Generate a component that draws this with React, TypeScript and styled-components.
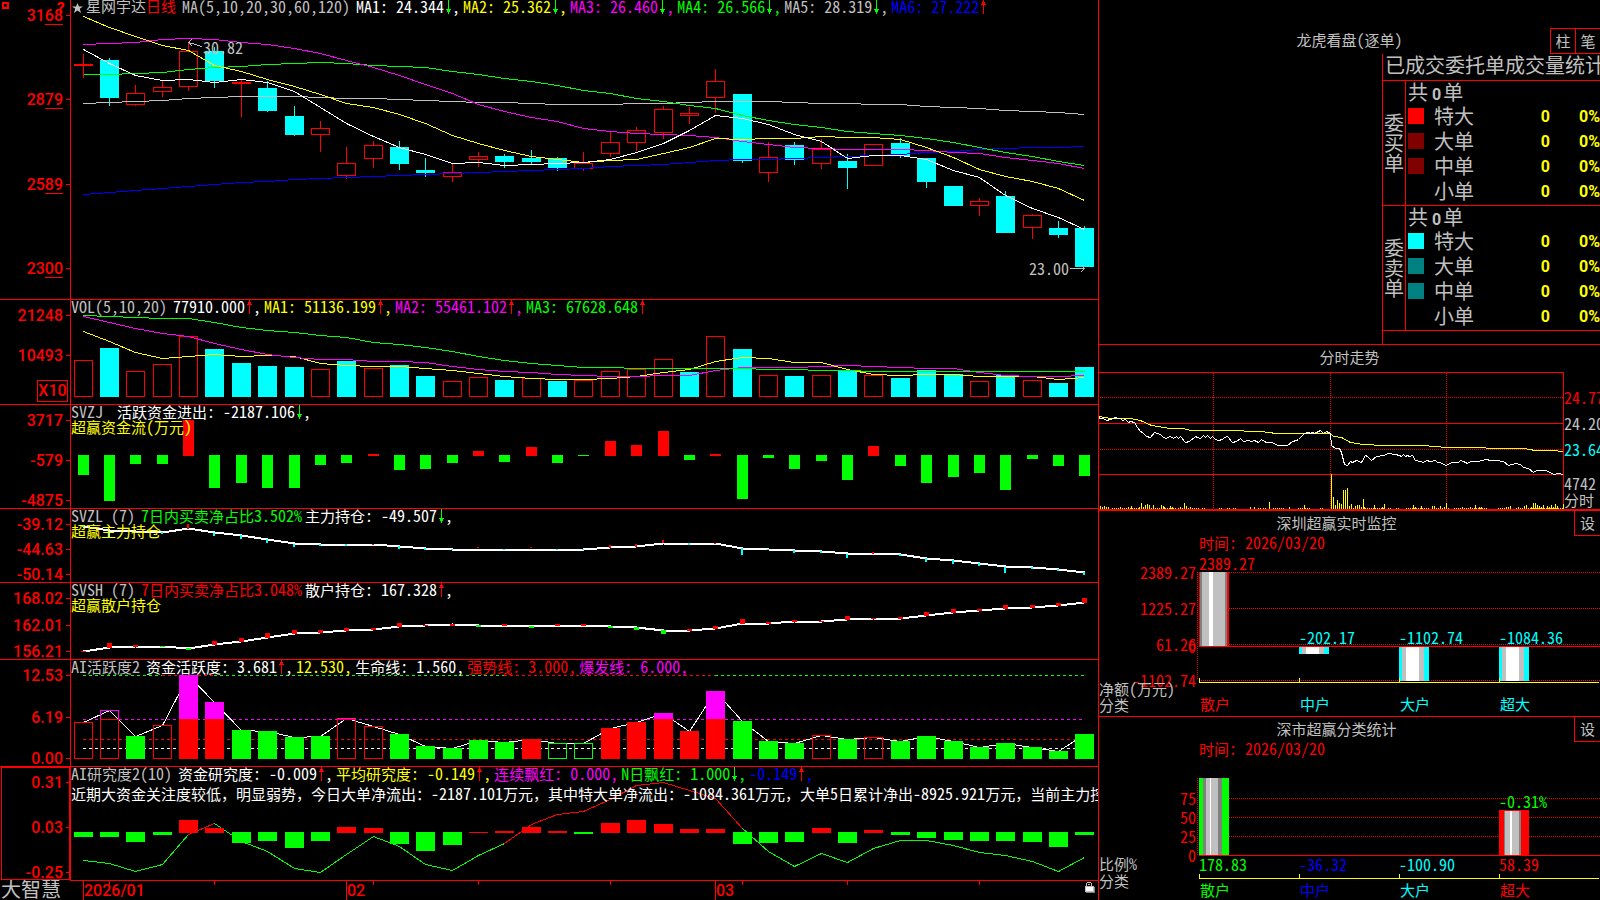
import React from "react";
import styled, { createGlobalStyle } from "styled-components";

const RED = "#ff0000";
const GREEN = "#00ff00";
const CYAN = "#00ffff";
const YELLOW = "#ffff00";
const MAGENTA = "#ff00ff";
const BLUE = "#0000ff";
const GREY = "#c0c0c0";
const DIM = "#808080";
const WHITE = "#ffffff";

const HALF = `"Noto Sans Mono CJK SC", "Liberation Mono", monospace`;
const FULL = `"Noto Sans CJK SC", sans-serif`;
const BOLD = `Roboto, "Liberation Sans", sans-serif`;

const GlobalStyle = createGlobalStyle`
  html, body { margin: 0; background: #000; color: ${GREY}; }
  body { font: 15px/16px ${FULL}; overflow: hidden; }
  * { box-sizing: border-box; }
  svg { display: block; width: 100%; height: 100%; min-height: 0; }
`;

/* ---------- text ---------- */

const HalfRun = styled.span`
  font-family: ${HALF};
  font-size: 16px;
`;

const SvgText = styled.text`
  font-family: ${FULL};
  font-size: 15px;
  white-space: pre;
`;

const SvgHalf = styled.tspan`
  font-family: ${HALF};
  font-size: 16px;
`;

const SvgBold = styled.text`
  font-family: ${BOLD};
  font-size: 16px;
  font-weight: 500;
`;

const runs = (s: string) => s.split(/([\x20-\x7e]+)/).filter(Boolean);
const isHalf = (s: string) => s.charCodeAt(0) < 127;

function Mixed({ text }: { text: string }) {
  return <>{runs(text).map((r, i) => (isHalf(r) ? <HalfRun key={i}>{r}</HalfRun> : r))}</>;
}

/** Chart label; y is the middle of the line. */
function Label({ x, y, color, end, text }: { x: number; y: number; color: string; end?: boolean; text: string }) {
  return (
    <SvgText x={x} y={y + (isHalf(text) ? 6 : 5)} fill={color} textAnchor={end ? "end" : "start"}>
      {runs(text).map((r, i) => (isHalf(r) ? <SvgHalf key={i}>{r}</SvgHalf> : r))}
    </SvgText>
  );
}

/* ---------- page frame ---------- */

const Page = styled.main`
  display: grid;
  grid-template-columns: minmax(0, 1099fr) minmax(0, 501fr);
  height: 100vh;
`;

const Charts = styled.section`
  display: grid;
  grid-template-rows: 300fr 105fr 104fr 74fr 77fr 107fr 113fr 20fr;
  border-right: 1px solid ${RED};
  min-height: 0;
`;

const ChartRow = styled.div<{ $open?: boolean }>`
  display: grid;
  grid-template-columns: 71px minmax(0, 1fr);
  grid-template-rows: minmax(0, 1fr);
  min-height: 0;
  border-bottom: ${(p) => (p.$open ? "none" : `1px solid ${RED}`)};
`;

const Axis = styled.div<{ $boxed?: boolean; $bottom?: number }>`
  display: flex;
  flex-direction: column;
  justify-content: space-between;
  position: relative;
  min-height: 0;
  padding: 8px 0 ${(p) => p.$bottom || 0}px;
  border-right: 1px solid ${RED};
  &::before {
    content: "";
    display: ${(p) => (p.$boxed ? "block" : "none")};
    position: absolute;
    inset: 0 0 0 1px;
    border: 1px solid ${RED};
  }
`;

const Tick = styled.div`
  display: flex;
  align-items: center;
  justify-content: flex-end;
  height: 15px;
  gap: 3px;
  color: ${RED};
  font: 500 16px/15px ${BOLD};
  &::after {
    content: "";
    width: 4px;
    height: 1px;
    background: ${RED};
  }
`;

const TickPair = styled.div`
  display: grid;
  gap: 25px;
`;

const Cents = styled.span`
  text-decoration: underline 1px;
  text-decoration-skip-ink: none;
  text-underline-offset: 3px;
`;

const Unit = styled.div`
  align-self: flex-end;
  width: 31px;
  height: 22px;
  margin: 0 2px 2px 0;
  border: 1px solid ${RED};
  color: ${RED};
  text-align: center;
  font: 500 16px/20px ${BOLD};
`;

const Plot = styled.div`
  display: grid;
  grid-template: minmax(0, 1fr) / minmax(0, 1fr);
  min-height: 0;
  overflow-x: clip;
  > * { grid-area: 1 / 1; }
`;

const Legend = styled.div`
  z-index: 1;
  align-self: start;
`;

const LegendRow = styled.div`
  display: flex;
  gap: 3px;
  height: 16px;
  line-height: 12px;
  white-space: pre;
`;

const Name = styled.span<{ $c?: string }>`
  color: ${(p) => p.$c || GREY};
  margin-right: 3px;
`;

const Item = styled.span<{ $c: string }>`
  display: flex;
  color: ${(p) => p.$c};
`;

const SubTitle = styled.div<{ $c: string; $gap?: number }>`
  color: ${(p) => p.$c};
  height: 15px;
  line-height: 11px;
  margin-top: ${(p) => p.$gap || 0}px;
  white-space: nowrap;
`;

const ArrowBox = styled.span`
  flex: none;
  width: 8px;
  height: 14px;
`;

function Arrow({ up }: { up?: boolean }) {
  return (
    <ArrowBox>
      <svg viewBox="0 0 8 14" shapeRendering="crispEdges" fill={up ? RED : GREEN}>
        <rect x="4" y="0" width="1" height="14" />
        {up ? (
          <>
            <rect x="3" y="2" width="3" height="2" />
            <rect x="2" y="4" width="5" height="1" />
          </>
        ) : (
          <>
            <rect x="3" y="10" width="3" height="2" />
            <rect x="2" y="9" width="5" height="1" />
          </>
        )}
      </svg>
    </ArrowBox>
  );
}

type LegendEntry = { c: string; t: string; dir?: "up" | "down"; end?: string };

function Entries({ items }: { items: LegendEntry[] }) {
  return (
    <>
      {items.map((it) => (
        <Item key={it.t} $c={it.c}>
          <span><Mixed text={it.t} /></span>
          {it.dir && <Arrow up={it.dir === "up"} />}
          <span><Mixed text={it.end ?? ","} /></span>
        </Item>
      ))}
    </>
  );
}

/* ---------- series ---------- */

const cx = (i: number) => Math.round(82.65 + 26.36 * i);
const third = (v: number, off: number) => Math.round(v / 3 + off);

function Line({ ys, off, color, from = 0, width = 1 }: { ys: number[]; off: number; color: string; from?: number; width?: number }) {
  const pts = ys.map((v, k) => `${cx(k + from) + 0.5},${Math.floor(v / 3 + off) + 0.5}`).join(" ");
  return <polyline points={pts} fill="none" stroke={color} strokeWidth={width} />;
}

function Box({ i, top, bottom, color, hollow, w = 19 }: { i: number; top: number; bottom: number; color: string; hollow?: boolean; w?: number }) {
  const x = cx(i) - (w - 1) / 2;
  const h = Math.max(1, bottom - top);
  return hollow ? (
    <rect x={x + 0.5} y={top + 0.5} width={w - 1} height={h - 1} fill="none" stroke={color} />
  ) : (
    <rect x={x} y={top} width={w} height={h} fill={color} />
  );
}

// kind, high, body top, body bottom, low: r rising, c falling, d flat
const candles: [string, number, number, number, number][] = [
  ["d", 163, 192, 198, 234], ["c", 174, 180, 294, 318], ["r", 255, 279, 315, 318], ["r", 243, 261, 276, 291],
  ["r", 128, 153, 261, 272], ["c", 141, 153, 243, 264], ["d", 240, 246, 252, 351], ["c", 243, 264, 333, 336],
  ["c", 318, 348, 405, 408], ["r", 363, 384, 405, 456], ["r", 441, 489, 528, 537], ["r", 423, 435, 477, 504],
  ["c", 423, 441, 492, 510], ["c", 474, 510, 519, 531], ["r", 490, 516, 531, 546], ["r", 456, 468, 480, 501],
  ["c", 462, 468, 486, 504], ["c", 450, 474, 486, 492], ["c", 471, 474, 504, 513], ["r", 456, 489, 507, 513],
  ["r", 395, 426, 462, 471], ["r", 381, 390, 429, 453], ["r", 318, 327, 399, 417], ["r", 321, 339, 348, 372],
  ["r", 207, 243, 294, 339], ["c", 282, 282, 483, 489], ["r", 426, 471, 519, 546], ["c", 426, 435, 480, 495],
  ["r", 417, 447, 492, 507], ["c", 462, 483, 504, 567], ["r", 432, 432, 498, 498], ["c", 414, 429, 468, 474],
  ["c", 474, 474, 546, 564], ["c", 558, 558, 618, 618], ["r", 594, 603, 618, 648], ["c", 573, 588, 699, 699],
  ["r", 642, 645, 684, 717], ["c", 663, 684, 705, 714], ["c", 678, 684, 801, 801],
];

const ma: [string, number[]][] = [
  [GREY, [311, 307, 305, 300, 295, 292, 290, 289, 289, 292, 295, 295, 299, 301, 304, 307, 308, 309, 313, 313, 313, 310, 310, 307, 304, 304, 304, 307, 310, 310, 313, 314, 319, 322, 325, 330, 334, 337, 343]],
  [BLUE, [583, 578, 571, 566, 560, 554, 548, 543, 539, 536, 533, 529, 527, 524, 521, 518, 515, 512, 509, 506, 500, 497, 493, 487, 482, 479, 478, 475, 471, 469, 465, 463, 458, 454, 449, 444, 442, 441, 438]],
  [GREEN, [223, 223, 220, 216, 208, 202, 198, 193, 189, 187, 190, 195, 199, 203, 214, 222, 235, 245, 256, 271, 281, 295, 304, 316, 326, 347, 360, 373, 381, 393, 400, 406, 415, 427, 442, 457, 470, 484, 497]],
  [MAGENTA, [132, 130, 127, 118, 115, 118, 126, 133, 146, 161, 181, 201, 227, 253, 280, 312, 334, 352, 365, 384, 395, 401, 404, 407, 413, 423, 433, 441, 445, 448, 448, 449, 450, 457, 461, 472, 480, 491, 505]],
  [YELLOW, [48, 83, 109, 136, 151, 196, 215, 239, 260, 282, 310, 322, 344, 370, 406, 430, 451, 469, 478, 486, 482, 478, 459, 441, 414, 417, 414, 414, 409, 412, 412, 419, 443, 471, 507, 528, 545, 566, 601]],
  [WHITE, [148, 190, 227, 240, 239, 247, 238, 247, 275, 322, 371, 408, 443, 464, 490, 488, 496, 493, 490, 486, 479, 458, 429, 392, 347, 354, 373, 403, 424, 475, 467, 467, 478, 512, 533, 586, 624, 653, 688]],
];

const volumes = "r192 c156 r225 r204 r120 c159 c201 c210 c213 r219 c195 r216 c207 c240 r255 r243 c252 r246 c255 r252 r225 r219 r189 c228 r120 c159 r237 c240 r237 c222 r237 c246 c222 c234 r255 c237 r252 c261 c213".split(" ");

const volMa: [string, number[]][] = [
  [YELLOW, [105, 136, 169, 187, 181, 176, 181, 177, 182, 202, 208, 211, 212, 217, 223, 231, 240, 246, 250, 250, 246, 241, 230, 221, 196, 184, 187, 199, 200, 221, 234, 239, 235, 235, 241, 241, 241, 250, 243]],
  [MAGENTA, [61, 79, 97, 112, 121, 143, 160, 176, 184, 189, 190, 196, 197, 200, 211, 220, 226, 230, 235, 239, 241, 241, 239, 238, 223, 214, 214, 213, 210, 208, 211, 214, 217, 217, 229, 238, 241, 241, 238]],
  [GREEN, [58, 61, 64, 67, 68, 80, 94, 104, 109, 118, 124, 139, 145, 154, 166, 181, 193, 202, 207, 214, 214, 217, 217, 217, 217, 217, 220, 220, 223, 223, 226, 226, 226, 226, 226, 226, 226, 226, 226]],
];

const flow = "g537 g615 g504 g504 r372 g576 g561 g576 g576 g507 g501 r474 g522 g519 g501 r465 g498 r453 g501 g480 r435 r447 r405 g492 r474 g609 g486 g519 g495 g552 r450 g510 g561 g543 g531 g582 g489 g510 g540".split(" ");

const holding = [690, 704, 707, 709, 698, 710, 717, 730, 743, 744, 744, 744, 750, 758, 759, 759, 759, 759, 759, 759, 754, 752, 742, 741, 741, 758, 760, 764, 766, 773, 773, 774, 787, 792, 801, 812, 814, 820, 828];
const holdingMarks = "c688-694 c704-724 c706-711 c709-713 r684-698 c710-719 c717-729 c730-740 c743-752 c744-749 c744-749 r743-747 c750-759 c756-762 c759-762 r753-757 c759-762 r753-757 c759-762 c759-762 r747-756 r743-752 r732-742 c741-747 r740-744 c757-777 c759-762 c762-771 c765-771 c773-786 r768-774 c773-780 c786-798 c792-804 c801-810 c812-831 c813-819 c819-825 c828-837".split(" ");

const retail = [184, 171, 170, 168, 175, 163, 155, 142, 130, 128, 121, 119, 109, 106, 104, 105, 105, 107, 106, 105, 109, 113, 121, 121, 116, 99, 99, 94, 93, 88, 84, 84, 76, 67, 61, 54, 52, 46, 37];
const retailMarks = "r182-186 r159-173 r165-171 g167-171 g173-180 r153-165 r144-156 r129-144 r120-132 r120-129 r114-123 r114-120 r99-110 r105-108 r102-107 g105-111 r102-107 g108-114 r102-107 r102-107 g107-114 g111-120 g120-132 r117-123 r108-117 r87-102 r96-102 r90-96 r93-96 r78-90 r84-87 r81-87 r66-78 r57-69 r57-63 r45-57 r45-54 r39-48 r24-39".split(" ");

// R and G are hollow, r and g are filled
const activity = "R396 R360 g438 R405 r255 r336 g420 g423 g441 g438 R384 R408 g432 g468 g474 g450 g456 r448 G459 G459 r414 r396 r369 r423 r303 g393 g453 g459 R435 g447 R441 g453 g438 g453 g471 g459 g471 g483 g432".split(" ");

const research = "g741 g741 g756 g735 r690 r714 g759 g753 g774 g753 r711 r714 g762 g783 g765 r726 r723 r711 r723 g732 r699 r690 r702 r717 r717 g762 g759 g756 r714 g759 r720 g735 g744 g750 g753 g753 g756 g771 g735".split(" ");
const researchLine = [811, 821, 844, 824, 734, 700, 754, 783, 835, 848, 793, 739, 768, 824, 841, 797, 759, 703, 673, 664, 628, 587, 577, 600, 625, 716, 785, 830, 790, 817, 775, 751, 751, 766, 787, 796, 815, 844, 801];

const val = (s: string) => Number(s.slice(1));
const tone: Record<string, string> = { r: RED, R: RED, g: GREEN, G: GREEN, c: CYAN };

function PlotSvg({ h, children }: { h: number; children: React.ReactNode }) {
  return (
    <svg viewBox={`71 0 1027 ${h}`} preserveAspectRatio="none" shapeRendering="crispEdges">
      {children}
    </svg>
  );
}

/* ---------- left-hand charts ---------- */

const CornerMark = styled.span`
  position: absolute;
  left: 2px;
  top: 2px;
  width: 7px;
  height: 7px;
  border: 2px solid ${RED};
`;

const HelpMark = styled.span`
  position: absolute;
  left: 57px;
  top: 0;
  color: ${RED};
  font: 900 15px/16px ${BOLD};
`;

const StarBox = styled.span`
  width: 11px;
  height: 15px;
  margin-left: 1px;
`;

const StockName = styled.span`
  margin-right: 3px;
  em { font-style: normal; color: ${RED}; }
`;

function PriceChart() {
  return (
    <ChartRow>
      <Axis $bottom={23}>
        <CornerMark />
        <HelpMark>?</HelpMark>
        {["3168", "2879", "2589", "2300"].map((v) => (
          <Tick key={v}>
            <span>{v.slice(0, 2)}<Cents>{v.slice(2)}</Cents></span>
          </Tick>
        ))}
      </Axis>
      <Plot>
        <Legend>
          <LegendRow>
            <StarBox>
              <svg viewBox="0 0 11 15" fill={GREY}>
                <path d="M5.5 3 7 6.6H11L7.8 8.8 9 13 5.5 10.5 2 13 3.2 8.8 0 6.6H4Z" />
              </svg>
            </StarBox>
            <StockName>星网宇达<em>日线</em></StockName>
            <Name><Mixed text="MA(5,10,20,30,60,120)" /></Name>
            <Entries
              items={[
                { c: WHITE, t: "MA1: 24.344", dir: "down" },
                { c: YELLOW, t: "MA2: 25.362", dir: "down" },
                { c: MAGENTA, t: "MA3: 26.460", dir: "down" },
                { c: GREEN, t: "MA4: 26.566", dir: "down" },
                { c: GREY, t: "MA5: 28.319", dir: "down" },
                { c: BLUE, t: "MA6: 27.222", dir: "up", end: "" },
              ]}
            />
          </LegendRow>
        </Legend>
        <PlotSvg h={299}>
          {candles.map(([k, hi, t, b, lo], i) => {
            const color = k === "c" ? CYAN : RED;
            const top = third(t, 0);
            const bottom = third(b, 0);
            const high = third(hi, 0);
            const low = third(lo, 0);
            return (
              <g key={i}>
                <rect x={cx(i)} y={high} width={1} height={top - high} fill={color} />
                <rect x={cx(i)} y={bottom} width={1} height={low - bottom} fill={color} />
                <Box i={i} top={top} bottom={bottom} color={color} hollow={k === "r"} />
              </g>
            );
          })}
          {ma.map(([c, ys], i) => <Line key={i} ys={ys} off={0} color={c} />)}
          <path d="M188.5 42.5L202 46.5M192 39L188.5 42.5L192 46" stroke={GREY} fill="none" />
          <Label x={203} y={48} color={GREY} text="30.82" />
          <Label x={1029} y={269} color={GREY} text="23.00" />
          <path d="M1070 268.5H1085M1081 265L1084.5 268.5L1081 272" stroke={GREY} fill="none" />
        </PlotSvg>
      </Plot>
    </ChartRow>
  );
}

function Ticks({ values }: { values: string[] }) {
  return <>{values.map((v) => <Tick key={v}>{v}</Tick>)}</>;
}

function VolumeChart() {
  return (
    <ChartRow>
      <Axis>
        <TickPair><Ticks values={["21248", "10493"]} /></TickPair>
        <Unit>X10</Unit>
      </Axis>
      <Plot>
        <Legend>
          <LegendRow>
            <Name><Mixed text="VOL(5,10,20)" /></Name>
            <Entries
              items={[
                { c: WHITE, t: "77910.000", dir: "up" },
                { c: YELLOW, t: "MA1: 51136.199", dir: "up" },
                { c: MAGENTA, t: "MA2: 55461.102", dir: "up" },
                { c: GREEN, t: "MA3: 67628.648", dir: "up", end: "" },
              ]}
            />
          </LegendRow>
        </Legend>
        <PlotSvg h={104}>
          {volumes.map((v, i) => (
            <Box key={i} i={i} top={third(val(v), -4)} bottom={97} color={tone[v[0]]} hollow={v[0] === "r"} />
          ))}
          {volMa.map(([c, ys], i) => <Line key={i} ys={ys} off={-4} color={c} />)}
        </PlotSvg>
      </Plot>
    </ChartRow>
  );
}

function FlowChart() {
  return (
    <ChartRow>
      <Axis><Ticks values={["3717", "-579", "-4875"]} /></Axis>
      <Plot>
        <Legend>
          <LegendRow>
            <Name><Mixed text="SVZJ " /></Name>
            <Entries items={[{ c: WHITE, t: "活跃资金进出: -2187.106", dir: "down" }]} />
          </LegendRow>
          <SubTitle $c={YELLOW}><Mixed text="超赢资金流(万元)" /></SubTitle>
        </Legend>
        <PlotSvg h={103}>
          {flow.map((v, i) =>
            v[0] === "g" ? (
              <Box key={i} i={i} w={11} top={50} bottom={third(val(v), -109)} color={GREEN} />
            ) : (
              <Box key={i} i={i} w={11} top={third(val(v), -109)} bottom={51} color={RED} />
            ),
          )}
        </PlotSvg>
      </Plot>
    </ChartRow>
  );
}

function Marks({ marks, off, w }: { marks: string[]; off: number; w: number }) {
  return (
    <>
      {marks.map((m, i) => {
        const [a, b] = m.slice(1).split("-").map(Number);
        const y = third(a, off);
        return <rect key={i} x={cx(i) - Math.floor(w / 2)} y={y} width={w} height={Math.max(1, third(b, off) - y)} fill={tone[m[0]]} />;
      })}
    </>
  );
}

function HoldingChart() {
  return (
    <ChartRow>
      <Axis><Ticks values={["-39.12", "-44.63", "-50.14"]} /></Axis>
      <Plot>
        <Legend>
          <LegendRow>
            <Name><Mixed text="SVZL (7)" /></Name>
            <Entries
              items={[
                { c: GREEN, t: "7日内买卖净占比3.502%", end: "" },
                { c: WHITE, t: "主力持仓: -49.507", dir: "down" },
              ]}
            />
          </LegendRow>
          <SubTitle $c={YELLOW}>超赢主力持仓</SubTitle>
        </Legend>
        <PlotSvg h={73}>
          <Line ys={holding} off={-213} color={WHITE} width={2} />
          <Marks marks={holdingMarks} off={-213} w={2} />
        </PlotSvg>
      </Plot>
    </ChartRow>
  );
}

function RetailChart() {
  return (
    <ChartRow>
      <Axis><Ticks values={["168.02", "162.01", "156.21"]} /></Axis>
      <Plot>
        <Legend>
          <LegendRow>
            <Name><Mixed text="SVSH (7)" /></Name>
            <Entries
              items={[
                { c: RED, t: "7日内买卖净占比3.048%", end: "" },
                { c: WHITE, t: "散户持仓: 167.328", dir: "up" },
              ]}
            />
          </LegendRow>
          <SubTitle $c={YELLOW}>超赢散户持仓</SubTitle>
        </Legend>
        <PlotSvg h={76}>
          <Line ys={retail} off={7} color={WHITE} width={2} />
          <Marks marks={retailMarks} off={7} w={5} />
        </PlotSvg>
      </Plot>
    </ChartRow>
  );
}

function ActivityChart() {
  const burst = 59;
  const dash = (y: number, c: string, a = 83, b = 1084) => (
    <path d={`M${a} ${y + 0.5}H${b}`} stroke={c} strokeDasharray="3 3" />
  );
  return (
    <ChartRow>
      <Axis><Ticks values={["12.53", "6.19", "0.00"]} /></Axis>
      <Plot>
        <Legend>
          <LegendRow>
            <Name><Mixed text="AI活跃度2" /></Name>
            <Entries
              items={[
                { c: WHITE, t: "资金活跃度: 3.681", dir: "up" },
                { c: YELLOW, t: "12.530" },
                { c: WHITE, t: "生命线: 1.560" },
                { c: RED, t: "强势线: 3.000" },
                { c: MAGENTA, t: "爆发线: 6.000" },
              ]}
            />
          </LegendRow>
        </Legend>
        <PlotSvg h={106}>
          {dash(15, GREEN, cx(0), cx(3))}
          {dash(15, RED, cx(3), cx(5))}
          {dash(15, GREEN, cx(5), cx(16))}
          {dash(15, RED, cx(16), cx(24))}
          {dash(15, GREEN, cx(24), cx(38))}
          {dash(burst, MAGENTA)}
          {dash(79, RED)}
          {dash(88, WHITE)}
          <Line ys={activity.map(val)} off={-70} color={WHITE} />
          {activity.map((v, i) => {
            const hollow = v[0] < "a";
            const top = third(val(v), -70);
            const over = top < burst;
            return (
              <g key={i}>
                <Box i={i} top={over ? burst : top} bottom={99} color={tone[v[0]]} hollow={hollow} />
                {over && <Box i={i} top={top} bottom={burst + (hollow ? 1 : 0)} color={MAGENTA} hollow={hollow} />}
                {over && hollow && <rect x={cx(i) - 9} y={burst} width={19} height={1} fill={RED} />}
              </g>
            );
          })}
        </PlotSvg>
      </Plot>
    </ChartRow>
  );
}

function ResearchChart() {
  const part = (a: number, b: number, c: string) => (
    <Line ys={researchLine.slice(a, b + 1)} from={a} off={-177} color={c} />
  );
  return (
    <ChartRow $open>
      <Axis $boxed><Ticks values={["0.31", "0.03", "-0.25"]} /></Axis>
      <Plot>
        <Legend>
          <LegendRow>
            <Name><Mixed text="AI研究度2(10)" /></Name>
            <Entries
              items={[
                { c: WHITE, t: "资金研究度: -0.009", dir: "up" },
                { c: YELLOW, t: "平均研究度: -0.149", dir: "up" },
                { c: MAGENTA, t: "连续飘红: 0.000" },
                { c: GREEN, t: "N日飘红: 1.000", dir: "down" },
                { c: BLUE, t: "-0.149", dir: "up" },
              ]}
            />
          </LegendRow>
          <SubTitle $c={WHITE} $gap={5}>
            <Mixed text="近期大资金关注度较低，明显弱势，今日大单净流出：-2187.101万元，其中特大单净流出：-1084.361万元，大单5日累计净出-8925.921万元，当前主力控盘" />
          </SubTitle>
        </Legend>
        <PlotSvg h={113}>
          {part(0, 4, GREEN)}
          {part(4, 5, RED)}
          {part(5, 16, GREEN)}
          {part(16, 25, RED)}
          {part(25, 38, GREEN)}
          {research.map((v, i) =>
            v[0] === "g" ? (
              <Box key={i} i={i} top={65} bottom={third(val(v), -177)} color={GREEN} />
            ) : (
              <Box key={i} i={i} top={third(val(v), -177)} bottom={66} color={RED} />
            ),
          )}
        </PlotSvg>
      </Plot>
    </ChartRow>
  );
}

const Brand = styled.div`
  padding-left: 1px;
  font-size: 20px;
  line-height: 18px;
  white-space: nowrap;
`;

const TimePlot = styled(Plot)`
  margin-left: -1px;
  border-top: 1px solid ${RED};
`;

function TimeAxis() {
  const months: [number, string][] = [[0, "2026/01"], [10, "02"], [24, "03"]];
  return (
    <ChartRow $open>
      <Brand>大智慧</Brand>
      <TimePlot>
        <svg viewBox="70 0 1028 19" preserveAspectRatio="none" shapeRendering="crispEdges">
          {months.map(([i, t]) => (
            <g key={t} fill={RED}>
              <rect x={cx(i)} y={0} width={1} height={19} />
              <SvgBold x={cx(i) + 1} y={15}>{t}</SvgBold>
            </g>
          ))}
          {[1, 5, 11, 15, 20, 25, 29, 34].map((i) => (
            <rect key={i} x={cx(i)} y={0} width={1} height={4} fill={RED} />
          ))}
          <rect x="1087" y="1" width="4" height="1" fill={GREY} />
          <rect x="1086" y="2" width="1" height="3" fill={GREY} />
          <rect x="1091" y="2" width="1" height="3" fill={GREY} />
          <rect x="1088" y="3" width="2" height="1" fill={GREY} />
          <rect x="1086" y="6" width="9" height="6" fill={DIM} />
          <rect x="1085" y="5" width="9" height="6" fill={GREY} />
          <rect x="1086" y="6" width="7" height="4" fill={WHITE} />
        </svg>
      </TimePlot>
    </ChartRow>
  );
}

/* ---------- right-hand panels ---------- */

const Side = styled.aside`
  display: grid;
  grid-template-rows: 345fr 166fr 206fr 183fr;
  min-height: 0;
  overflow: hidden;
`;

const Panel = styled.section<{ $line: number }>`
  display: flex;
  flex-direction: column;
  min-height: 0;
  border-bottom: ${(p) => p.$line}px solid ${RED};
`;

const PanelTitle = styled.h2`
  margin: 0;
  font-size: 15px;
  font-weight: 400;
  line-height: 23px;
  text-align: center;
  flex: 1;
`;

const SmallButton = styled.button`
  width: 25px;
  height: 26px;
  padding: 0;
  border: 1px solid ${RED};
  border-right: none;
  background: #000;
  color: ${GREY};
  font: 15px/20px ${FULL};
`;

const SetButton = styled(SmallButton)`
  width: 26px;
  height: 25px;
  border-top: none;
`;

const PanelHead = styled.header`
  display: flex;
  flex: none;
  height: 25px;
`;

const OrderHead = styled.header`
  display: grid;
  grid-template-columns: 1fr auto 1fr;
  padding-top: 28px;
  flex: none;
`;

const ButtonPair = styled.div`
  display: flex;
  justify-self: end;
  grid-column: 3;
`;

const Orders = styled.div`
  flex: 1;
  align-self: flex-end;
  width: 218px;
  border-left: 1px solid ${RED};
  font-size: 20px;
`;

const OrdersTitle = styled.div`
  height: 27px;
  padding-left: 2px;
  border-bottom: 1px solid ${RED};
  line-height: 22px;
  white-space: nowrap;
`;

const Block = styled.div`
  display: flex;
  height: 125px;
  border-bottom: 1px solid ${RED};
`;

const Turned = styled.div`
  display: flex;
  flex-direction: column;
  justify-content: center;
  width: 23px;
  padding: 0 1px;
  line-height: 20px;
  text-align: center;
  border-right: 1px solid ${RED};
`;

const OrderTable = styled.table`
  flex: 1;
  align-self: flex-start;
  table-layout: fixed;
  border-collapse: collapse;
  caption {
    height: 23px;
    padding-left: 2px;
    line-height: 21px;
    text-align: left;
  }
  caption b { margin: 0 2px 0 4px; font: 700 16px/21px ${BOLD}; }
  tr { height: 25px; }
  th, td { padding: 0; line-height: 22px; }
  th { padding-bottom: 2px; font-weight: 400; text-align: left; }
  td { text-align: right; }
`;

const Num = styled.td`
  && {
    color: ${YELLOW};
    font: 700 16px/24px ${BOLD};
  }
`;

const Swatch = styled.i<{ $c: string }>`
  display: block;
  width: 16px;
  height: 16px;
  margin: 0 0 1px 2px;
  background: ${(p) => p.$c};
`;

function OrderBlock({ side, colors }: { side: string; colors: string[] }) {
  return (
    <Block>
      <Turned>{[...side].map((c) => <span key={c}>{c}</span>)}</Turned>
      <OrderTable>
        <caption>共<b>0</b>单</caption>
        <colgroup>
          <col width="28" />
          <col width="46" />
          <col width="70" />
          <col width="50" />
        </colgroup>
        <tbody>
          {["特大", "大单", "中单", "小单"].map((n, i) => (
            <tr key={n}>
              <td><Swatch $c={colors[i]} /></td>
              <th scope="row">{n}</th>
              <Num>0</Num>
              <Num>0%</Num>
            </tr>
          ))}
        </tbody>
      </OrderTable>
    </Block>
  );
}

function OrderPanel() {
  return (
    <Panel $line={1}>
      <OrderHead>
        <span />
        <PanelTitle><Mixed text="龙虎看盘(逐单)" /></PanelTitle>
        <ButtonPair>
          <SmallButton type="button">柱</SmallButton>
          <SmallButton type="button">笔</SmallButton>
        </ButtonPair>
      </OrderHead>
      <Orders>
        <OrdersTitle>已成交委托单成交量统计</OrdersTitle>
        <OrderBlock side="委买单" colors={[RED, "#800000", "#800000", "#000000"]} />
        <OrderBlock side="委卖单" colors={[CYAN, "#008080", "#008080", "#000000"]} />
      </Orders>
    </Panel>
  );
}

const avgPath = "27,229 60,235 120,235 150,240 185,255 240,264 280,265 300,270 410,271 510,275 560,279 720,280 730,288 755,292 780,308 820,312 880,315 1000,316 1070,321 1170,322 1200,325 1300,325 1335,330 1385,332 1419,334";
const pricePath = "27,226 29,234 40,236 50,241 60,237 75,232 84,236 92,234 97,242 105,238 115,247 120,243 132,248 143,262 150,273 158,277 170,290 182,292 192,278 201,281 210,282 216,290 225,295 240,290 250,295 258,290 264,295 272,290 285,307 298,303 315,289 322,291 330,294 340,287 346,292 352,286 360,294 366,290 376,297 385,301 397,299 404,292 412,290 428,306 440,303 452,296 460,304 475,302 485,304 494,302 505,306 515,298 524,304 530,306 548,307 562,317 592,317 608,303 618,302 625,298 634,290 643,279 655,276 662,279 668,276 674,280 680,277 690,271 700,279 710,275 720,280 724,315 735,326 748,326 754,336 757,350 764,374 771,376 780,364 788,367 800,361 815,366 825,346 833,348 843,361 860,350 880,347 895,340 915,343 928,347 935,349 940,344 945,349 952,345 957,348 968,345 975,360 990,365 1000,367 1010,362 1020,365 1035,362 1042,368 1050,368 1060,374 1070,375 1085,368 1095,366 1104,366 1110,360 1120,365 1132,370 1140,365 1150,363 1165,365 1185,358 1205,362 1220,360 1240,363 1255,376 1275,370 1290,374 1300,381 1315,386 1330,397 1340,391 1365,391 1380,397 1390,403 1405,401 1419,403";
const toPoints = (s: string) =>
  s.split(" ").map((p) => {
    const [x, y] = p.split(",").map(Number);
    return `${Math.floor(1090 + x / 3) + 0.5},${Math.floor(340 + y / 3) + 0.5}`;
  }).join(" ");

const spikes = "31,498 37,501 43,498 49,501 55,501 91,501 115,501 124,498 148,501 154,489 160,501 166,495 172,492 178,495 190,496 214,495 220,498 223,501 241,498 247,501 271,501 283,489 289,498 301,501 481,501 493,501 538,486 598,501 643,495 724,402 730,471 736,495 742,480 748,491 754,494 760,450 766,450 772,444 778,498 784,492 796,498 802,495 808,495 814,501 820,477 823,501 853,495 877,501 883,492 970,495 976,501 994,498 1027,498 1033,498 1051,498 1063,501 1069,489 1117,501 1141,501 1156,495 1168,501 1174,501 1249,501 1255,501 1261,498 1285,501 1303,498 1309,495 1324,501 1330,489 1336,489 1342,495 1348,498 1354,501 1360,495 1372,498 1378,501 1384,495 1390,501 1396,492 1402,498 1419,492";
const quiet: [number, number][] = [[67, 145], [184, 256], [265, 325], [337, 343], [388, 396], [412, 418], [430, 436], [505, 511], [520, 528], [550, 580], [625, 640], [646, 658], [690, 700], [790, 880], [895, 901], [920, 928], [950, 1020], [1039, 1060], [1075, 1080], [1093, 1190], [1225, 1262], [1279, 1420]];

const IntradayTitle = styled(PanelTitle)`
  flex: none;
  height: 27px;
`;

function IntradayPanel() {
  const dot = { stroke: RED, strokeDasharray: "1 1" };
  return (
    <Panel $line={2}>
      <IntradayTitle>分时走势</IntradayTitle>
      <svg viewBox="1099 372 501 137" shapeRendering="crispEdges">
        <path d="M1099 372.5H1563.5V509M1099 423.5H1563M1099 474.5H1563" stroke={RED} fill="none" />
        <path d="M1100 397.5H1563" {...dot} />
        <path d="M1100 449.5H1563" {...dot} />
        {[1213, 1330, 1446].map((x) => <path key={x} d={`M${x}.5 373V509`} {...dot} />)}
        {quiet.map(([a, b]) => (
          <path key={a} d={`M${Math.floor(1090 + a / 3)} 508.5H${Math.ceil(1090 + b / 3)}`} stroke={YELLOW} strokeDasharray="1 1" />
        ))}
        {spikes.split(" ").map((p) => {
          const [x, y] = p.split(",").map(Number);
          const top = Math.floor(340 + y / 3);
          return <rect key={p} x={Math.floor(1090 + x / 3)} y={top} width={1} height={509 - top} fill={YELLOW} />;
        })}
        <polyline points={toPoints(avgPath)} fill="none" stroke={YELLOW} />
        <polyline points={toPoints(pricePath)} fill="none" stroke={WHITE} />
        <Label x={1564} y={398} color={RED} text="24.77" />
        <Label x={1564} y={424} color={GREY} text="24.20" />
        <Label x={1564} y={450} color={CYAN} text="23.64" />
        <Label x={1564} y={484} color={GREY} text="4742" />
        <Label x={1564} y={501} color={GREY} text="分时" />
      </svg>
    </Panel>
  );
}

/** Shaded column, painted as vertical stripes from left to right. */
function Column({ x, y, h, stripes }: { x: number; y: number; h: number; stripes: [string, number][] }) {
  let at = x;
  return (
    <g>
      {stripes.map(([c, w], i) => {
        const left = at;
        at += w;
        return <rect key={i} x={left} y={y} width={w} height={h} fill={c} />;
      })}
    </g>
  );
}

const cyanStripes: [string, number][] = [[CYAN, 3], [GREY, 4], [WHITE, 13], [GREY, 5], [CYAN, 5]];

function BaseLine({ y }: { y: number }) {
  return (
    <path
      d={`M1199 ${y}.5H1599M1199.5 ${y - 4}V${y}M1299.5 ${y - 4}V${y}M1399.5 ${y - 4}V${y}M1499.5 ${y - 4}V${y}`}
      stroke={YELLOW}
      fill="none"
    />
  );
}

function Dots({ rows, top, bottom }: { rows: number[]; top: number; bottom: number }) {
  return (
    <g stroke={RED} strokeDasharray="1 1">
      <path d={`M1197.5 ${top}V${bottom}`} />
      {rows.map((y) => <path key={y} d={`M1199 ${y}.5H1600`} />)}
    </g>
  );
}

function NetPanel() {
  return (
    <Panel $line={1}>
      <PanelHead>
        <PanelTitle>深圳超赢实时监控</PanelTitle>
        <SetButton type="button">设</SetButton>
      </PanelHead>
      <svg viewBox="1099 536 501 180" shapeRendering="crispEdges">
        <Dots rows={[572, 608, 644, 680]} top={572} bottom={680} />
        <Label x={1199} y={544} color={RED} text="时间: 2026/03/20" />
        <Label x={1199} y={564} color={RED} text="2389.27" />
        <Label x={1196} y={573} color={RED} end text="2389.27" />
        <Label x={1196} y={609} color={RED} end text="1225.27" />
        <Label x={1196} y={645} color={RED} end text="61.26" />
        <Label x={1196} y={647} color={RED} end text="0" />
        <Label x={1196} y={681} color={RED} end text="-1102.74" />
        <rect x={1199} y={646} width={401} height={1} fill={RED} />
        <Column x={1199} y={572} h={74} stripes={[[RED, 1], [DIM, 2], [GREY, 7], [WHITE, 4], [GREY, 12], [DIM, 2], [RED, 2]]} />
        <Column x={1299} y={647} h={7} stripes={cyanStripes} />
        <Column x={1399} y={647} h={34} stripes={cyanStripes} />
        <Column x={1499} y={647} h={34} stripes={cyanStripes} />
        <Label x={1299} y={638} color={CYAN} text="-202.17" />
        <Label x={1399} y={638} color={CYAN} text="-1102.74" />
        <Label x={1499} y={638} color={CYAN} text="-1084.36" />
        <BaseLine y={682} />
        <Label x={1099} y={690} color={GREY} text="净额(万元)" />
        <Label x={1099} y={706} color={GREY} text="分类" />
        <Label x={1200} y={705} color={RED} text="散户" />
        <Label x={1300} y={705} color={CYAN} text="中户" />
        <Label x={1400} y={705} color={CYAN} text="大户" />
        <Label x={1500} y={705} color={CYAN} text="超大" />
      </svg>
    </Panel>
  );
}

function SharePanel() {
  return (
    <Panel $line={0}>
      <PanelHead>
        <PanelTitle>深市超赢分类统计</PanelTitle>
        <SetButton type="button">设</SetButton>
      </PanelHead>
      <svg viewBox="1099 742 501 158" shapeRendering="crispEdges">
        <Dots rows={[798, 817, 836]} top={778} bottom={855} />
        <Label x={1199} y={750} color={RED} text="时间: 2026/03/20" />
        <Label x={1196} y={799} color={RED} end text="75" />
        <Label x={1196} y={818} color={RED} end text="50" />
        <Label x={1196} y={837} color={RED} end text="25" />
        <Label x={1196} y={856} color={RED} end text="0" />
        <rect x={1199} y={855} width={401} height={1} fill={RED} />
        <Column x={1199} y={778} h={77} stripes={[[GREEN, 4], [DIM, 3], [GREY, 4], [WHITE, 1], [GREY, 7], [DIM, 4], [GREEN, 7]]} />
        <rect x={1499} y={810} width={30} height={1} fill={RED} />
        <Column x={1499} y={811} h={44} stripes={[[RED, 5], [DIM, 1], [GREY, 5], [WHITE, 2], [GREY, 7], [DIM, 2], [RED, 8]]} />
        <Label x={1499} y={802} color={GREEN} text="-0.31%" />
        <Label x={1199} y={865} color={GREEN} text="178.83" />
        <Label x={1299} y={865} color={BLUE} text="-36.32" />
        <Label x={1399} y={865} color={CYAN} text="-100.90" />
        <Label x={1499} y={865} color={RED} text="58.39" />
        <BaseLine y={878} />
        <Label x={1099} y={865} color={GREY} text="比例%" />
        <Label x={1099} y={882} color={GREY} text="分类" />
        <Label x={1200} y={891} color={GREEN} text="散户" />
        <Label x={1300} y={891} color={BLUE} text="中户" />
        <Label x={1400} y={891} color={CYAN} text="大户" />
        <Label x={1500} y={891} color={RED} text="超大" />
      </svg>
    </Panel>
  );
}

export default function App() {
  return (
    <>
      <GlobalStyle />
      <Page>
        <Charts>
          <PriceChart />
          <VolumeChart />
          <FlowChart />
          <HoldingChart />
          <RetailChart />
          <ActivityChart />
          <ResearchChart />
          <TimeAxis />
        </Charts>
        <Side>
          <OrderPanel />
          <IntradayPanel />
          <NetPanel />
          <SharePanel />
        </Side>
      </Page>
    </>
  );
}
